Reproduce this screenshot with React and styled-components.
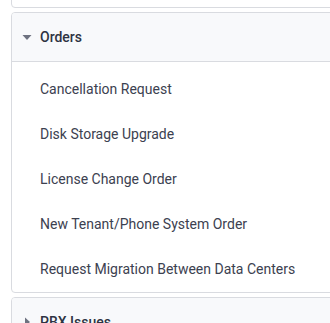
import React from "react";
import styled, { createGlobalStyle } from "styled-components";

const Global = createGlobalStyle`
  html, body { margin: 0; padding: 0; background: #ffffff; overflow: hidden; }
  body { font-family: Roboto, "Liberation Sans", Arial, sans-serif; }
`;

const Page = styled.div`
  display: flex;
  flex-direction: column;
  gap: 4px;
  padding-left: 11px;
  margin-top: -32px;
  width: 350px;
`;

const Card = styled.section`
  border: 1px solid #d9dbe0;
  border-radius: 4px;
  background: #ffffff;
  overflow: hidden;
`;

const Header = styled.div`
  display: flex;
  align-items: center;
  height: 48px;
  padding-left: 10px;
  gap: 8px;
  background: #f8f9fb;
  border-bottom: ${(p) => (p.$open ? "1px solid #d9dbe0" : "none")};
  font-size: 14px;
  font-weight: 500;
  color: #2e3342;
`;

const Caret = styled.span`
  display: inline-flex;
  width: 10px;
  height: 10px;
  align-items: center;
  justify-content: center;
`;

const Empty = styled.div`
  height: 38px;
`;

const List = styled.ul`
  list-style: none;
  margin: 0;
  padding: 4px 0 1px 0;
`;

const Item = styled.li`
  height: 45px;
  display: flex;
  align-items: center;
  padding-left: 28px;
  font-size: 14px;
  color: #3c4150;
`;

function CaretIcon({ open }) {
  return (
    <Caret>
      <svg width="10" height="10" viewBox="0 0 10 10">
        {open ? (
          <path d="M0.5 3 L9.5 3 L5 8 Z" fill="#6e7280" />
        ) : (
          <path d="M3 0.5 L8 5 L3 9.5 Z" fill="#6e7280" />
        )}
      </svg>
    </Caret>
  );
}

const items = [
  "Cancellation Request",
  "Disk Storage Upgrade",
  "License Change Order",
  "New Tenant/Phone System Order",
  "Request Migration Between Data Centers",
];

export default function App() {
  return (
    <>
      <Global />
      <Page>
        <Card>
          <Empty />
        </Card>
        <Card>
          <Header $open>
            <CaretIcon open />
            Orders
          </Header>
          <List>
            {items.map((t) => (
              <Item key={t}>{t}</Item>
            ))}
          </List>
        </Card>
        <Card>
          <Header>
            <CaretIcon />
            PBX Issues
          </Header>
        </Card>
      </Page>
    </>
  );
}
